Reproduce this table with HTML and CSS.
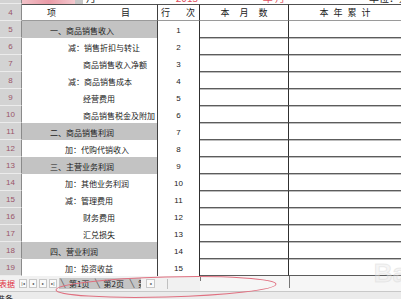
FILE: index.html
```html
<!DOCTYPE html>
<html lang="zh">
<head>
<meta charset="utf-8">
<link rel="stylesheet" href="styles.css">
</head>
<body>
<div class="page">
  <div class="sheet">
    <div class="rh">3</div>
    <div class="tc title-a"><span class="pink"></span><span class="gblk"></span><span class="tt">月</span></div>
    <div class="tc t-red">2013</div>
    <div class="tc t-red2">年 月</div>
    <div class="tc t-unit">单位：元</div>

    <div class="rh">4</div>
    <div class="hd item-h"><span>项</span><span>目</span></div>
    <div class="hd no-h"><span>行</span><span>次</span></div>
    <div class="hd m-h">本月数</div>
    <div class="hd y-h">本年累计</div>

    <div class="rh">5</div><div class="item g l1">一、商品销售收入</div><div class="no">1</div><div class="m"></div><div class="y"></div>
    <div class="rh">6</div><div class="item l2">减：销售折扣与转让</div><div class="no">2</div><div class="m"></div><div class="y"></div>
    <div class="rh">7</div><div class="item l3">商品销售收入净额</div><div class="no">3</div><div class="m"></div><div class="y"></div>
    <div class="rh">8</div><div class="item l2">减：商品销售成本</div><div class="no">4</div><div class="m"></div><div class="y"></div>
    <div class="rh">9</div><div class="item l3">经营费用</div><div class="no">5</div><div class="m"></div><div class="y"></div>
    <div class="rh">10</div><div class="item l3">商品销售税金及附加</div><div class="no">6</div><div class="m"></div><div class="y"></div>
    <div class="rh">11</div><div class="item g l1">二、商品销售利润</div><div class="no">7</div><div class="m"></div><div class="y"></div>
    <div class="rh">12</div><div class="item l4">加：代购代销收入</div><div class="no">8</div><div class="m"></div><div class="y"></div>
    <div class="rh">13</div><div class="item g l1">三、主营业务利润</div><div class="no">9</div><div class="m"></div><div class="y"></div>
    <div class="rh">14</div><div class="item l4">加：其他业务利润</div><div class="no">10</div><div class="m"></div><div class="y"></div>
    <div class="rh">15</div><div class="item l4">减：管理费用</div><div class="no">11</div><div class="m"></div><div class="y"></div>
    <div class="rh">16</div><div class="item l3">财务费用</div><div class="no">12</div><div class="m"></div><div class="y"></div>
    <div class="rh">17</div><div class="item l3">汇兑损失</div><div class="no">13</div><div class="m"></div><div class="y"></div>
    <div class="rh">18</div><div class="item g l1">四、营业利润</div><div class="no">14</div><div class="m"></div><div class="y"></div>
    <div class="rh">19</div><div class="item l4">加：投资收益</div><div class="no">15</div><div class="m"></div><div class="y"></div>
  </div>

  <div class="tabbar">
    <div class="tabzone">
      <span class="sname">表据</span>
      <span class="nav">|◂</span><span class="nav">◂</span><span class="nav">▸</span><span class="nav">▸|</span>
      <div class="tabs">
        <span class="slash">╲</span><span class="tab">第1页</span>
        <span class="slash">╲</span><span class="tab">第2页</span>
        <span class="slash">╲</span><span class="tab cut">第</span>
      </div>
      <span class="nav sbtn">◂</span>
      <span class="sep"></span>
    </div>
    <div class="colm"></div>
    <div class="colr"></div>
  </div>
  <div class="status">准备</div>

  <svg class="mark" width="401" height="299" viewBox="0 0 401 299">
    <ellipse cx="166" cy="287" rx="110" ry="10" fill="none" stroke="#e07080" stroke-width="1" transform="rotate(-1.5 166 287)"/>
  </svg>
  <div class="wm">Ba</div>
</div>
</body>
</html>
```

FILE: styles.css
```css
html, body {
  margin: 0;
  padding: 0;
}
body {
  width: 401px;
  height: 299px;
  overflow: hidden;
  background: #ffffff;
  font-family: "Noto Sans CJK SC", "Liberation Sans", sans-serif;
  color: #222;
}
.page {
  position: relative;
  width: 401px;
  height: 299px;
  overflow: hidden;
  display: flex;
  flex-direction: column;
}
.sheet {
  display: grid;
  grid-template-columns: 22px 136px 42px 89px 1fr;
  grid-auto-rows: 17px;
  margin-top: -13px;
  flex: none;
}
.rh {
  background: #d3d3d3;
  border-right: 1px solid #8a8a8a;
  border-bottom: 1px solid #ececec;
  color: #9a5468;
  font-family: "Liberation Sans", sans-serif;
  font-size: 8px;
  display: flex;
  align-items: center;
  justify-content: center;
}
.tc {
  display: flex;
  align-items: flex-end;
  font-size: 10px;
  line-height: 10px;
  padding-bottom: 1px;
  white-space: nowrap;
}
.title-a {
  padding-bottom: 0;
}
.pink {
  width: 53px;
  height: 5px;
  background: linear-gradient(90deg, #f2c2c8, #e99aa6 50%, #f4c8ce);
}
.gblk {
  width: 8px;
  height: 4px;
  background: #c6c6c6;
}
.tt {
  margin-left: 3px;
  margin-bottom: 1px;
}
.t-red {
  color: #e05060;
  justify-content: flex-end;
  padding-right: 2px;
}
.t-red2 {
  color: #e05060;
  justify-content: flex-end;
  padding-right: 4px;
}
.t-unit {
  justify-content: flex-end;
  font-size: 10px;
  margin-right: -8px;
}
.hd {
  border-top: 1px solid #505050;
  border-bottom: 1px solid #9a9a9a;
  display: flex;
  align-items: center;
  font-size: 9px;
}
.item-h {
  border-right: 1px solid #404040;
  justify-content: space-between;
  padding: 0 27px 0 25px;
}
.no-h {
  border-right: 1px solid #303030;
  justify-content: space-between;
  padding: 0 4px 0 3px;
}
.m-h {
  border-right: 1px solid #303030;
  justify-content: center;
  letter-spacing: 10px;
  padding-left: 10px;
}
.y-h {
  justify-content: center;
  letter-spacing: 5px;
  padding-left: 5px;
}
.item {
  border-right: 1px solid #404040;
  display: flex;
  align-items: flex-end;
  padding-bottom: 2px;
  font-size: 8px;
  line-height: 10px;
  white-space: nowrap;
}
.item.g {
  background: #c3c3c3;
}
.l1 { padding-left: 28px; }
.l2 { padding-left: 46px; }
.l3 { padding-left: 61px; }
.l4 { padding-left: 43px; }
.no {
  border-right: 1px solid #303030;
  display: flex;
  align-items: flex-end;
  justify-content: center;
  padding-bottom: 2px;
  font-family: "Liberation Sans", sans-serif;
  font-size: 8px;
  line-height: 10px;
}
.m {
  border-right: 1px solid #303030;
  border-bottom: 1px solid #5c5c5c;
  box-shadow: 0 1px 0 #bdbdbd;
}
.y {
  border-bottom: 1px solid #5c5c5c;
  box-shadow: 0 1px 0 #bdbdbd;
}
.tabbar {
  height: 15px;
  flex: none;
  display: flex;
  background: #f6f6f6;
}
.tabzone {
  width: 200px;
  flex: none;
  display: flex;
  align-items: center;
  background: #f1f1f1;
  white-space: nowrap;
}
.sname {
  flex: none;
  width: 18px;
  color: #e0303e;
  font-size: 8px;
  line-height: 10px;
  margin-left: -2px;
  padding-left: 1px;
}
.nav {
  flex: none;
  width: 8px;
  height: 9px;
  margin-left: 2px;
  border: 1px solid #c8c8c8;
  background: #fafafa;
  font-family: "DejaVu Sans", sans-serif;
  font-size: 4px;
  line-height: 7px;
  text-align: center;
  color: #333;
  box-sizing: border-box;
  overflow: hidden;
}
.tabs {
  flex: none;
  display: flex;
  align-items: center;
  height: 11px;
  margin-left: 2px;
  background: #c4c4c4;
  width: 82px;
  overflow: hidden;
  white-space: nowrap;
}
.slash {
  flex: none;
  font-family: "DejaVu Sans", sans-serif;
  font-size: 8px;
  line-height: 11px;
  color: #555;
  width: 8px;
  text-align: center;
}
.tab {
  flex: none;
  padding: 0 4px 0 2px;
  color: #222;
  font-size: 8px;
  line-height: 11px;
}
.tab.cut {
  padding-right: 0;
}
.sbtn {
  margin-left: 5px;
  width: 9px;
}
.sep {
  flex: none;
  width: 1px;
  height: 10px;
  background: #c0c0c0;
  margin-left: 12px;
}
.colm {
  flex: none;
  width: 89px;
  height: 5px;
  border-left: 1px solid #777;
  box-sizing: border-box;
}
.colr {
  flex: 1;
  height: 12px;
  border-left: 1px solid #777;
}
.status {
  flex: 1;
  background: #ebebeb;
  border-top: 1px solid #c8c8c8;
  font-size: 8px;
  line-height: 14px;
  margin-left: -3px;
  color: #222;
  overflow: hidden;
}
.mark {
  position: absolute;
  left: 0;
  top: 0;
  pointer-events: none;
}
.wm {
  position: absolute;
  right: -6px;
  top: 258px;
  font-family: "Liberation Sans", sans-serif;
  font-weight: bold;
  font-size: 26px;
  color: rgba(230, 230, 230, 0.4);
  -webkit-text-stroke: 1px rgba(205, 205, 205, 0.35);
}
```
